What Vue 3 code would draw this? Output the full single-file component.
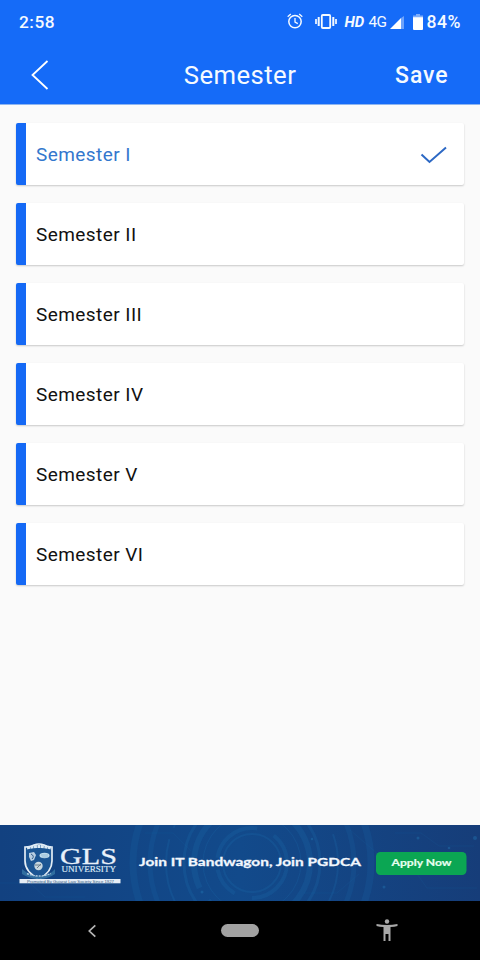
<script setup>
import { ref } from 'vue'

const semesters = ['I', 'II', 'III', 'IV', 'V', 'VI']
const selected = ref('I')
</script>

<template>
  <div class="screen">
    <header class="top">
      <div class="status">
        <span class="time">2:58</span>
        <svg class="alarm" width="16" height="16" viewBox="0 0 16 16" fill="none" stroke="currentColor">
          <circle cx="8" cy="8.6" r="6.2" stroke-width="1.5" />
          <path d="M8 5v4l2.8 1.6M.7 3.7 3.8 1.1M15.3 3.7 12.2 1.1" stroke-width="1.3" />
        </svg>
        <svg class="vibrate" width="22" height="15" viewBox="0 0 22 15" fill="none" stroke="currentColor">
          <rect x="6.8" y="1" width="8.4" height="13" rx="1" stroke-width="1.8" />
          <path d="M3.7 3v9M18.3 3v9" stroke-width="2" />
          <path d="M1 5v5M21 5v5" stroke-width="1.7" />
        </svg>
        <span class="hd">HD</span>
        <span class="net">4G</span>
        <svg class="signal" width="15" height="13" viewBox="0 0 15 13">
          <path d="M0 13 11 2V13z" fill="#fff" />
          <path d="M11 2 14 0V13H11z" fill="#fff" fill-opacity=".38" />
        </svg>
        <svg class="battery" width="10" height="16" viewBox="0 0 10 16">
          <path d="M3 0h4v1.5h3V4H0V1.5h3z" fill="#fff" fill-opacity=".45" />
          <path d="M0 3.2h10V15a1 1 0 0 1-1 1H1a1 1 0 0 1-1-1z" fill="#fff" />
        </svg>
        <span class="percent">84%</span>
      </div>
      <nav class="bar">
        <button class="back" aria-label="Back">
          <svg width="18" height="30" viewBox="0 0 18 30" fill="none" stroke="#fff" stroke-width="1.8">
            <path d="M16.5 1 1.5 15l15 14" />
          </svg>
        </button>
        <h1>Semester</h1>
        <button class="save">Save</button>
      </nav>
    </header>

    <main class="list">
      <button
        v-for="s in semesters"
        :key="s"
        class="item"
        :class="{ active: s === selected }"
        @click="selected = s"
      >
        <span>Semester {{ s }}</span>
        <svg v-if="s === selected" width="28" height="20" viewBox="0 0 28 20" fill="none" stroke="#2c68c4" stroke-width="2">
          <path d="M1.5 9.5 9.5 17 26 2.5" />
        </svg>
      </button>
    </main>

    <footer class="ad">
      <svg width="480" height="76" viewBox="0 0 480 76">
        <defs>
          <linearGradient id="sea" x1="0" x2="1">
            <stop offset="0" stop-color="#124180" />
            <stop offset=".5" stop-color="#124a8b" />
            <stop offset="1" stop-color="#163d79" />
          </linearGradient>
        </defs>
        <rect width="480" height="76" fill="url(#sea)" />
        <g fill="none" stroke="#1b6aab">
          <g stroke-opacity=".25">
            <circle cx="252" cy="38" r="29" stroke-width="2" />
            <circle cx="252" cy="38" r="35" stroke-width="4" stroke-dasharray="55 18 30 12" />
            <circle cx="252" cy="38" r="49" stroke-width="1" />
            <circle cx="252" cy="38" r="58" stroke-width="6" stroke-dasharray="75 24 42 15" />
            <circle cx="252" cy="38" r="68" stroke-width="3" />
            <circle cx="252" cy="38" r="86" stroke-width="2" stroke-dasharray="90 12" />
            <circle cx="252" cy="38" r="102" stroke-width="5" stroke-opacity=".2" />
            <circle cx="252" cy="38" r="119" stroke-width="7" stroke-opacity=".2" />
          </g>
          <path d="M0 58h30l15 14h40M145 8h28l18 18M350 5l35 30h22l20 28h50M395 8h26l18 13h35M304 68h33l22-19" stroke-opacity=".13" />
        </g>
        <g fill="#2379b5" fill-opacity=".4">
          <circle cx="384" cy="62" r="1.5" /><circle cx="418" cy="13" r="1.5" />
          <circle cx="449" cy="23" r="1.3" /><circle cx="475" cy="13" r="2" />
          <circle cx="312" cy="14" r="1.3" /><circle cx="202" cy="67" r="1.5" />
        </g>

        <path d="M25 22q6 0 9-2 5-2 10 0 3 2 8 2v14q0 11-13 18-14-7-14-18z" fill="#1b5593" stroke="#e3edf5" stroke-width="1.7" />
        <path d="M27 23q6-1.5 12-1.5t12 1.5" stroke="#dceaf5" stroke-width="3" stroke-dasharray="3 .5" fill="none" />
        <path d="m29 28 5-1 2 3-2 5-3 1-2-4z" fill="#b8cee1" />
        <path d="M31 29q4 2 1 5" stroke="#315d89" fill="none" />
        <ellipse cx="44.5" cy="30.5" rx="5" ry="2.8" fill="#bfdbeb" />
        <path d="M41 30h7M42 32h6" stroke="#8fb5cf" stroke-width=".8" />
        <circle cx="38.5" cy="41" r="4.2" fill="#c7d7e0" />
        <path d="M35 40h6M37 43l4-4" stroke="#697c89" />
        <path d="M22 44l4 3q13 9 26 0l3-3v5q-7 5-16 5t-17-5z" fill="#2f6d9f" />
        <path d="M27 48.5q12 5 24 0" fill="none" stroke="#a9c7dc" stroke-width="1.4" stroke-dasharray="2 1" />
        <text class="gls" x="60" y="39" textLength="57" lengthAdjust="spacingAndGlyphs">GLS</text>
        <text class="university" x="61.5" y="47" textLength="54.5" lengthAdjust="spacingAndGlyphs">UNIVERSITY</text>
        <rect x="19.5" y="54" width="101" height="4.3" fill="#e5edf6" />
        <text class="promoted" x="27" y="57.7" textLength="87" lengthAdjust="spacingAndGlyphs">Promoted By Gujarat Law Society Since 1927</text>
        <text class="pitch" x="139" y="41" textLength="222" lengthAdjust="spacingAndGlyphs">Join IT Bandwagon, Join PGDCA</text>
        <rect x="376" y="27" width="90.5" height="23" rx="4.5" fill="#0ba653" />
        <text class="apply" x="391.5" y="41" textLength="60" lengthAdjust="spacingAndGlyphs">Apply Now</text>
      </svg>
    </footer>

    <nav class="system">
      <svg class="sys-back" width="10" height="14" viewBox="0 0 10 14" fill="none" stroke="#b5b5b5" stroke-width="1.7">
        <path d="M8.3 1.3 2.3 7l6 5.7" />
      </svg>
      <span class="home"></span>
      <svg class="person" width="22" height="23" viewBox="0 0 22 23" fill="#a8a8a8">
        <circle cx="11" cy="2.5" r="2.2" />
        <path d="M.5 5Q11 7.2 21.5 5v2q-3 .8-7 1.1V22h-2v-7h-3v7h-2V8.1Q3.5 7.8.5 7z" />
      </svg>
    </nav>
  </div>
</template>

<style>
body { margin: 0; }
</style>

<style scoped>
.screen {
  width: 480px;
  height: 960px;
  display: flex;
  flex-direction: column;
  background: #fafafa;
  font-family: Roboto, sans-serif;
  overflow: hidden;
}
button {
  border: 0;
  padding: 0;
  background: none;
  font: inherit;
  color: inherit;
}
.top {
  height: 105px;
  flex: none;
  background: #156bf8;
  color: #f5faff;
  border-bottom: 1px solid #8eb5ef;
  box-sizing: border-box;
}
.status {
  height: 44px;
  display: flex;
  align-items: center;
  padding-left: 19px;
  box-sizing: border-box;
  white-space: nowrap;
}
.status svg, .status span { flex: none; }
.time { width: 268px; font-size: 17.3px; font-weight: 500; letter-spacing: .5px; }
.alarm { margin-top: -2px; }
.vibrate { margin-left: 12px; margin-top: -1px; }
.hd { width: 24px; margin-left: 7.5px; font-size: 15px; font-weight: 700; font-style: italic; margin-top: -1px; }
.net { width: 21px; font-size: 15.4px; margin-top: -1px; letter-spacing: -.6px; }
.signal { margin-top: 1px; }
.battery { margin-left: 8px; }
.percent { margin-left: 4px; font-size: 17.6px; font-weight: 500; letter-spacing: .5px; }
.bar {
  height: 60px;
  display: grid;
  grid-template-columns: 120px 240px 120px;
  align-items: center;
}
.back { display: flex; padding-left: 31px; padding-top: 2px; }
h1 {
  margin: 0;
  font-size: 25.7px;
  line-height: 30px;
  padding-top: 2px;
  font-weight: 400;
  text-align: center;
  letter-spacing: .45px;
}
.save { font-size: 23px; font-weight: 500; text-align: left; padding-left: 35px; padding-top: 3px; letter-spacing: .95px; }
.list {
  flex: 1;
  display: flex;
  flex-direction: column;
  gap: 18px;
  padding: 18px 16px 0;
}
.item {
  height: 62px;
  box-sizing: border-box;
  border-left: 10px solid #1569f5;
  border-radius: 2px;
  background: #fff;
  box-shadow: 0 1px 2px rgba(0, 0, 0, .2);
  padding: 1px 16px 0 10px;
  display: flex;
  align-items: center;
  justify-content: space-between;
  color: #111;
  font-size: 19px;
  letter-spacing: .44px;
}
.active { color: #3377cd; }
.ad { height: 76px; flex: none; }
.ad svg { display: block; }
.gls { font: 23.4px "Liberation Serif", serif; fill: #e8f1fa; stroke: #e8f1fa; stroke-width: .3; }
.university { font: 8px "Liberation Serif", serif; fill: #dceaf7; stroke: #dceaf7; stroke-width: .15; }
.promoted { font: 4.2px "Liberation Sans", sans-serif; fill: #355d85; }
.pitch { font: 700 12px Lato, sans-serif; fill: #f2f7fd; stroke: #f2f7fd; stroke-width: .3; }
.apply { font: 700 10px Lato, sans-serif; fill: #e6fff0; stroke: #e6fff0; stroke-width: .2; }
.system {
  height: 59px;
  flex: none;
  background: #000;
  display: flex;
  align-items: center;
  padding-left: 87px;
}
.home { width: 37.5px; height: 12.5px; margin-left: 124px; border-radius: 7px; background: #a2a2a2; }
.person { margin-left: 117.5px; }
</style>
